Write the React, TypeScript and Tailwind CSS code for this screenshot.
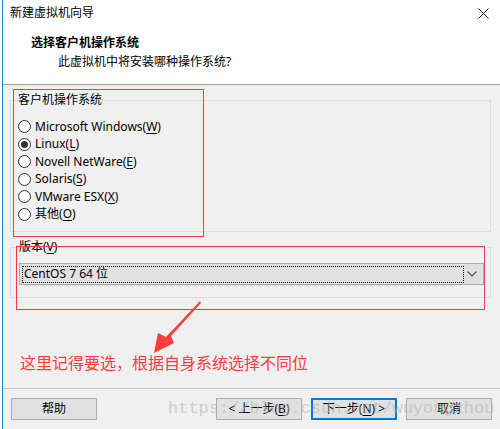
import React from "react";

const ui = "font-['Noto_Sans','Noto_Sans_CJK_SC',sans-serif]";

function Radio({ label, keyChar, checked }: { label: string; keyChar: string; checked?: boolean }) {
  return (
    <div className="flex h-[17.5px] items-center gap-[4px]">
      <span className="flex h-[13px] w-[13px] items-center justify-center rounded-full border border-[#333333] bg-white">
        {checked && <span className="h-[7px] w-[7px] rounded-full bg-[#333333]" />}
      </span>
      <span className="text-[12px] leading-[16px] text-black">
        {label}(<span className="underline underline-offset-2">{keyChar}</span>)
      </span>
    </div>
  );
}

function Button({ children, primary }: { children: React.ReactNode; primary?: boolean }) {
  return (
    <button
      className={
        "flex h-[22px] w-[86px] items-center justify-center bg-[#e1e1e1] text-[12px] leading-[16px] text-black " +
        (primary ? "border-2 border-[#0078d7]" : "border border-[#adadad]")
      }
    >
      {children}
    </button>
  );
}

export default function App() {
  return (
    <div className={"relative h-[429px] w-[500px] overflow-hidden bg-white pl-[2px] " + ui}>
      <div className="flex h-full flex-col border-l border-[#1883d7] bg-[#f0f0f0]">
        {/* title + header */}
        <div className="h-[84px] bg-white">
          <div className="flex h-[26px] items-center justify-between pl-[7px] pr-[10px]">
            <span className="text-[12px] leading-[16px] text-black">新建虚拟机向导</span>
            <svg width="11" height="11" viewBox="0 0 11 11" className="mr-[1px]">
              <path d="M0.5 0.5 L10.5 10.5 M10.5 0.5 L0.5 10.5" stroke="#111" strokeWidth="1" />
            </svg>
          </div>
          <div className="mt-[9px] pl-[28px] text-[12px] font-bold leading-[16px] text-black">选择客户机操作系统</div>
          <div className="mt-[3px] pl-[55px] text-[12px] leading-[16px] text-black">此虚拟机中将安装哪种操作系统?</div>
        </div>
        <div className="h-px bg-[#a0a0a0]" />

        {/* body */}
        <div className="flex h-[303px] flex-col pl-[7px]">
          <fieldset className="mt-[7px] w-[481px] border border-[#dcdcdc] pb-[8px] pl-[7px]">
            <legend className="ml-[0px] px-[0px] text-[12px] leading-[16px] text-black">客户机操作系统</legend>
            <div className="pt-[10px]">
              <Radio label="Microsoft Windows" keyChar="W" />
              <Radio label="Linux" keyChar="L" checked />
              <Radio label="Novell NetWare" keyChar="E" />
              <Radio label="Solaris" keyChar="S" />
              <Radio label="VMware ESX" keyChar="X" />
              <Radio label="其他" keyChar="O" />
            </div>
          </fieldset>

          <fieldset className="mt-[7px] w-[481px] border border-[#dcdcdc] pb-[12px] pl-[8px]">
            <legend className="text-[12px] leading-[16px] text-black">
              版本(<span className="underline underline-offset-2">V</span>)
            </legend>
            <div className="mt-[8px] flex h-[22px] w-[465px] items-center border border-[#adadad] bg-[#e1e1e1] pl-[2px] pr-[5px]">
              <div className="flex h-[17px] w-[442px] items-center border border-dotted border-black pl-[1px] text-[12px] leading-[16px] text-black">
                CentOS 7 64 位
              </div>
              <svg width="10" height="6" viewBox="0 0 10 6" className="ml-auto mr-[1px]">
                <path d="M0.5 0.5 L5 5 L9.5 0.5" stroke="#555" strokeWidth="1.2" fill="none" />
              </svg>
            </div>
          </fieldset>

          <div className="mt-[54px] pl-[10px] text-[16px] leading-[22px] text-[#ff3b3b]">
            这里记得要选，根据自身系统选择不同位
          </div>
        </div>

        <div className="h-px bg-[#c8c8c8]" />

        {/* footer */}
        <div className="flex h-[39px] items-start pl-[8px] pr-[8px] pt-[9px]">
          <Button>帮助</Button>
          <div className="ml-auto flex gap-[9px]">
            <Button>
              &lt; 上一步(<span className="underline underline-offset-2">B</span>)
            </Button>
            <Button primary>
              下一步(<span className="underline underline-offset-2">N</span>) &gt;
            </Button>
            <Button>取消</Button>
          </div>
        </div>
      </div>

      {/* annotations over the screenshot */}
      <div className="pointer-events-none absolute left-[13px] top-[89px] h-[148px] w-[191px] border border-[#f03c3c]" />
      <div className="pointer-events-none absolute left-[16px] top-[246px] h-[64px] w-[469px] border border-[#f03c3c]" />
      <svg className="pointer-events-none absolute left-0 top-0" width="500" height="429">
        <polygon points="200,301 201,303 171,336 174,343 154,353 158,333 166,337" fill="#ff3b3b" />
      </svg>
      <div className="pointer-events-none absolute left-[168px] top-[398px] font-['Liberation_Mono',monospace] text-[17px] leading-[22px] text-[#b4b4b4]/60">
        https://blog.csdn.net/wuyongzhou
      </div>
    </div>
  );
}
